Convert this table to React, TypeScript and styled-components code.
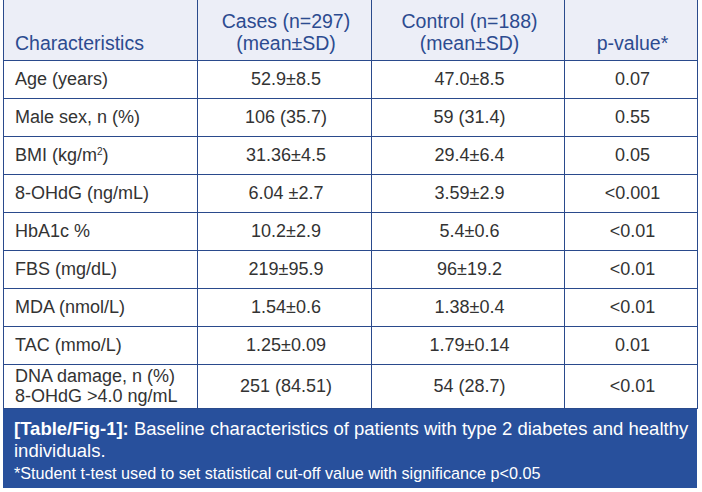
import React from "react";
import styled, { createGlobalStyle } from "styled-components";

const Global = createGlobalStyle`
  html, body { margin: 0; padding: 0; background: #ffffff; }
  body { font-family: "Liberation Sans", Arial, sans-serif; }
`;

const Figure = styled.div`
  width: 694px;
  margin-left: 3px;
  display: flex;
  flex-direction: column;
`;

const Table = styled.table`
  width: 100%;
  border-collapse: collapse;
  table-layout: fixed;
  font-family: "Liberation Sans", Arial, sans-serif;
`;

const HeadRow = styled.tr`
  height: 60px;
  background: #eceef7;
`;

const HeadCell = styled.th<{ $align?: string }>`
  border: 1px solid #2a4a8c;
  border-top: none;
  color: #2c4b90;
  font-weight: normal;
  font-size: 19.5px;
  line-height: 22px;
  text-align: ${(p) => p.$align || "center"};
  vertical-align: bottom;
  padding: 0 8px 6px 11px;
  white-space: nowrap;
`;

const Row = styled.tr<{ $tall?: boolean }>`
  height: ${(p) => (p.$tall ? "44px" : "38px")};
`;

const Cell = styled.td<{ $align?: string }>`
  border: 1px solid #2a4a8c;
  color: #333333;
  font-size: 18px;
  line-height: 20px;
  text-align: ${(p) => p.$align || "center"};
  vertical-align: middle;
  padding: 0 8px 0 11px;
  white-space: nowrap;
`;

const Sup = styled.sup`
  font-size: 10px;
  vertical-align: 6px;
  line-height: 0;
`;

const Caption = styled.div`
  background: #28509c;
  color: #ffffff;
  padding: 9px 8px 6px 11px;
  height: 79px;
  box-sizing: border-box;
  display: flex;
  flex-direction: column;
`;

const CaptionText = styled.div`
  font-size: 18.5px;
  line-height: 22px;
`;

const Label = styled.span`
  font-weight: bold;
`;

const Note = styled.div`
  font-size: 16.2px;
  line-height: 19px;
  margin-top: 2px;
`;

const rows: [React.ReactNode, string, string, string][] = [
  ["Age (years)", "52.9±8.5", "47.0±8.5", "0.07"],
  ["Male sex, n (%)", "106 (35.7)", "59 (31.4)", "0.55"],
  [<>BMI (kg/m<Sup>2</Sup>)</>, "31.36±4.5", "29.4±6.4", "0.05"],
  ["8-OHdG (ng/mL)", "6.04 ±2.7", "3.59±2.9", "<0.001"],
  ["HbA1c %", "10.2±2.9", "5.4±0.6", "<0.01"],
  ["FBS (mg/dL)", "219±95.9", "96±19.2", "<0.01"],
  ["MDA (nmol/L)", "1.54±0.6", "1.38±0.4", "<0.01"],
  ["TAC (mmo/L)", "1.25±0.09", "1.79±0.14", "0.01"],
];

export default function App() {
  return (
    <>
      <Global />
      <Figure>
        <Table>
          <colgroup>
            <col style={{ width: "194px" }} />
            <col style={{ width: "174px" }} />
            <col style={{ width: "193px" }} />
            <col style={{ width: "133px" }} />
          </colgroup>
          <thead>
            <HeadRow>
              <HeadCell $align="left">Characteristics</HeadCell>
              <HeadCell>
                Cases (n=297)
                <br />
                (mean±SD)
              </HeadCell>
              <HeadCell>
                Control (n=188)
                <br />
                (mean±SD)
              </HeadCell>
              <HeadCell>p-value*</HeadCell>
            </HeadRow>
          </thead>
          <tbody>
            {rows.map((r, i) => (
              <Row key={i}>
                <Cell $align="left">{r[0]}</Cell>
                <Cell>{r[1]}</Cell>
                <Cell>{r[2]}</Cell>
                <Cell>{r[3]}</Cell>
              </Row>
            ))}
            <Row $tall>
              <Cell $align="left">
                DNA damage, n (%)
                <br />
                8-OHdG &gt;4.0 ng/mL
              </Cell>
              <Cell>251 (84.51)</Cell>
              <Cell>54 (28.7)</Cell>
              <Cell>&lt;0.01</Cell>
            </Row>
          </tbody>
        </Table>
        <Caption>
          <CaptionText>
            <Label>[Table/Fig-1]:</Label> Baseline characteristics of patients with type 2 diabetes and healthy
            individuals.
          </CaptionText>
          <Note>*Student t-test used to set statistical cut-off value with significance p&lt;0.05</Note>
        </Caption>
      </Figure>
    </>
  );
}
